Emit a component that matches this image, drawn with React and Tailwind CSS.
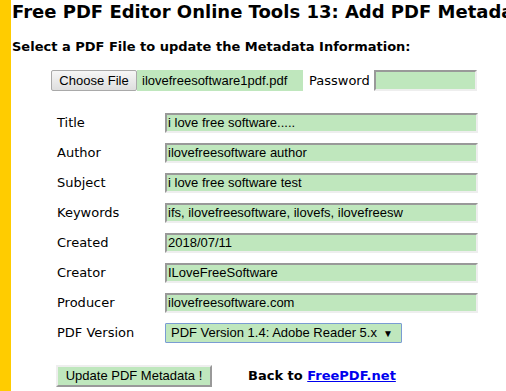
export default function App() {
  const rows = [
    ["Title", "i love free software....."],
    ["Author", "ilovefreesoftware author"],
    ["Subject", "i love free software test"],
    ["Keywords", "ifs, ilovefreesoftware, ilovefs, ilovefreesw"],
    ["Created", "2018/07/11"],
    ["Creator", "ILoveFreeSoftware"],
    ["Producer", "ilovefreesoftware.com"],
  ];
  const verdana = "font-['Verdana','DejaVu_Sans',sans-serif]";
  const arial = "font-['Liberation_Sans',Arial,sans-serif]";
  return (
    <div className="flex w-[506px] h-[391px] overflow-hidden bg-white">
      <div className="w-[11px] shrink-0 bg-[#ffcc00]" />
      <div className="flex-1 min-w-0 overflow-hidden">
        <h1 className={`${verdana} font-bold text-[18px] leading-[20px] mt-[2px] ml-[1px] whitespace-nowrap text-black`}>
          Free PDF Editor Online Tools 13: Add PDF Metadata
        </h1>
        <h2 className={`${verdana} font-bold text-[13px] leading-[16px] mt-[17px] ml-[1px] whitespace-nowrap text-black`}>
          Select a PDF File to update the Metadata Information:
        </h2>
        <div className="flex items-center mt-[15px] ml-[40px] h-[21px]">
          <div className={`${arial} text-[13px] h-[21px] w-[86px] flex items-center justify-center border border-[#a9a9a9] rounded-[2px] bg-gradient-to-b from-[#f6f6f6] to-[#dedede] text-black`}>
            Choose File
          </div>
          <div className={`${arial} text-[13px] h-[21px] w-[166px] flex items-center pl-[5px] bg-[#bfe7bd] text-black`}>
            ilovefreesoftware1pdf.pdf
          </div>
          <div className={`${verdana} text-[13px] ml-[6px] w-[65px] text-black`}>Password</div>
          <div className="h-[21px] w-[103px] border-2 border-t-[#999] border-l-[#999] border-r-[#eee] border-b-[#eee] bg-[#bfe7bd]" />
        </div>
        <div className="grid grid-cols-[108px_auto] gap-y-[10px] mt-[22px] ml-[46px] items-center">
          {rows.map(([label, value]) => (
            <div key={label} className="contents">
              <div className={`${verdana} text-[13px] text-black`}>{label}</div>
              <div className={`${arial} text-[13px] h-[20px] w-[313px] flex items-center pl-[1px] border-2 border-t-[#999] border-l-[#999] border-r-[#eee] border-b-[#eee] bg-[#bfe7bd] text-black whitespace-nowrap overflow-hidden`}>
                {value}
              </div>
            </div>
          ))}
          <div className={`${verdana} text-[13px] text-black`}>PDF Version</div>
          <div className={`${arial} text-[13px] h-[20px] w-[237px] flex items-center pl-[5px] border border-[#7a9cd3] rounded-[1px] bg-[#bfe7bd] text-black whitespace-nowrap`}>
            PDF Version 1.4: Adobe Reader 5.x
            <span className="ml-[6px] text-[10px]">▼</span>
          </div>
        </div>
        <div className="flex items-center mt-[22px] ml-[45px]">
          <div className={`${arial} text-[13px] h-[22px] w-[156px] flex items-center justify-center border-2 border-t-[#eee] border-l-[#eee] border-r-[#999] border-b-[#999] bg-[#bfe7bd] text-black`}>
            Update PDF Metadata !
          </div>
          <div className={`${verdana} font-bold text-[13px] ml-[36px] text-black whitespace-nowrap`}>
            Back to <a href="#" className="text-[#0000ee] underline">FreePDF.net</a>
          </div>
        </div>
      </div>
    </div>
  );
}
